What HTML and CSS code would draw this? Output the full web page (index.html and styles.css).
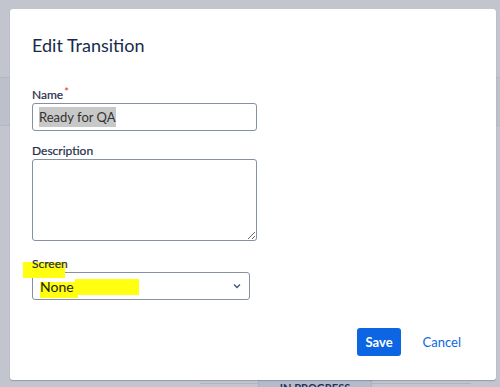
FILE: index.html
```html
<!DOCTYPE html>
<html lang="en">
<head>
    <meta charset="UTF-8">
    <title>Edit Transition</title>
    <link rel="stylesheet" href="styles.css">
</head>
<body>
    <!-- page behind the blanket -->
    <div class="page-band"></div>
    <div class="page-lane">
        <span class="lane-arrow lane-arrow-left"></span>
        <div class="status-box">IN PROGRESS</div>
        <span class="lane-arrow lane-arrow-right"></span>
    </div>

    <div class="modal">
        <h1 class="modal-title">Edit Transition</h1>

        <div class="form-group">
            <label class="form-label">Name<span class="required">*</span></label>
            <div class="form-input"><span class="selected">Ready for QA</span></div>
        </div>

        <div class="form-group">
            <label class="form-label">Description</label>
            <textarea class="form-textarea"></textarea>
        </div>

        <div class="form-group screen-group">
            <span class="marker marker-label"></span>
            <label class="form-label">Screen</label>
            <div class="form-select">
                <span class="marker marker-value-a"></span>
                <span class="marker marker-value-b"></span>
                <span class="select-value">None</span>
                <svg class="chevron" width="8" height="6" viewBox="0 0 8 6">
                    <path d="M1 1.5 L4 4.5 L7 1.5" fill="none" stroke="#42526e" stroke-width="1.3"/>
                </svg>
            </div>
        </div>

        <div class="modal-footer">
            <button type="button" class="btn-save">Save</button>
            <a href="#" class="btn-cancel">Cancel</a>
        </div>
    </div>
</body>
</html>
```

FILE: styles.css
```css
:root {
    --blanket: #c2c5ce;
    --text-color: #172b4d;
    --label-color: #1f2d4a;
    --border-color: #8590a2;
    --primary-color: #0c66e4;
    --marker: #ffff0f;
}

body {
    font-family: Lato, "Noto Sans", sans-serif;
    margin: 0;
    padding: 9px 4px 0 10px;
    background-color: var(--blanket);
    color: var(--text-color);
    position: relative;
    overflow: hidden;
    height: 387px;
    box-sizing: border-box;
}

/* Page behind the blanket */
.page-band {
    position: absolute;
    left: 0;
    right: 0;
    top: 77px;
    height: 47px;
    border-top: 1px solid #b3b8c3;
    border-bottom: 1px solid #b3b8c3;
    background: #bcc0ca;
}

.page-lane {
    position: absolute;
    left: 0;
    right: 0;
    top: 380px;
    height: 10px;
    display: flex;
    align-items: flex-start;
}

.status-box {
    margin-left: 258px;
    width: 112px;
    height: 12px;
    background: #b4bccb;
    border-left: 1px solid #a9b1c0;
    border-right: 1px solid #a9b1c0;
    font-size: 11px;
    font-weight: 700;
    line-height: 12px;
    padding-top: 2px;
    text-align: center;
    color: #23345a;
}

.lane-arrow {
    position: absolute;
    top: 3px;
    height: 1px;
    background: #aeb3bd;
}

.lane-arrow-left {
    left: 200px;
    width: 58px;
}

.lane-arrow-right {
    left: 371px;
    width: 100px;
}

/* Modal */
.modal {
    position: relative;
    z-index: 10;
    background: #fff;
    border-radius: 3px;
    width: 486px;
    height: 371px;
    box-sizing: border-box;
    padding: 24px 22px 0 22px;
    box-shadow: 0 1px 1px rgba(9, 30, 66, 0.25);
}

.modal-title {
    font-size: 18px;
    font-weight: 400;
    line-height: 24px;
    margin: 0 0 30px;
    color: var(--text-color);
}

.form-group {
    margin-bottom: 12px;
    position: relative;
}

.form-label {
    display: block;
    font-size: 12px;
    font-weight: 400;
    line-height: 16px;
    margin-bottom: 0;
    color: var(--label-color);
    -webkit-text-stroke: 0.2px var(--label-color);
}

.required {
    color: #de350b;
    vertical-align: top;
    font-size: 11px;
    line-height: 10px;
    margin-left: 1px;
    -webkit-text-stroke: 0;
}

.form-input {
    width: 225px;
    height: 28px;
    box-sizing: border-box;
    border: 1px solid var(--border-color);
    border-radius: 3px;
    padding: 0 6px;
    font-size: 13px;
    line-height: 26px;
    color: #333;
}

.selected {
    background: #c8c8c8;
    padding: 2px 0;
}

.form-textarea {
    display: block;
    width: 225px;
    height: 82px;
    box-sizing: border-box;
    border: 1px solid var(--border-color);
    border-radius: 3px;
    margin: 0;
    font-family: inherit;
}

.screen-group {
    margin-top: 15px;
}

.form-select {
    position: relative;
    width: 218px;
    height: 28px;
    box-sizing: border-box;
    border: 1px solid var(--border-color);
    border-radius: 3px;
    padding: 0 8px 0 7px;
    display: flex;
    align-items: center;
    justify-content: space-between;
    font-size: 14px;
    color: #1d1d1d;
}

.select-value {
    position: relative;
    z-index: 2;
}

/* Yellow marker strokes drawn over the form */
.marker {
    position: absolute;
    background: var(--marker);
    z-index: 1;
}

.marker-label {
    left: -9px;
    top: 6px;
    width: 42px;
    height: 16px;
}

.screen-group .form-label {
    position: relative;
    z-index: 2;
}

.marker-value-a {
    left: 7px;
    top: 9px;
    width: 38px;
    height: 16px;
}

.marker-value-b {
    left: 42px;
    top: 6px;
    width: 64px;
    height: 16px;
}

.modal-footer {
    display: flex;
    justify-content: flex-end;
    align-items: center;
    gap: 22px;
    margin-top: 28px;
    padding-right: 13px;
}

.btn-save {
    height: 28px;
    padding: 0 8px;
    border: none;
    border-radius: 3px;
    background: var(--primary-color);
    color: #fff;
    font-family: inherit;
    font-size: 13px;
    font-weight: 700;
    cursor: pointer;
}

.btn-cancel {
    color: var(--primary-color);
    text-decoration: none;
    font-size: 13px;
}
```
